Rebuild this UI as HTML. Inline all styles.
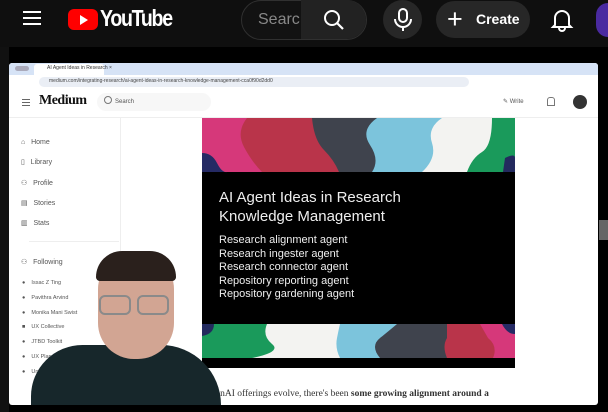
<!DOCTYPE html><html style="overflow:hidden;height:412px"><head><style>
body{margin:0;width:608px;height:412px;overflow:hidden;background:#000;font-family:"Liberation Sans",sans-serif;position:relative}
.a{position:absolute}
.t{color:#555;font-size:7px}
</style></head><body>
<div class="a" style="left:0;top:0;width:608px;height:47px;background:#0f0f0f"></div>
<div class="a" style="left:0;top:47px;width:608px;height:365px;background:#000"></div>
<div class="a" style="left:0;top:47px;width:9px;height:365px;background:#111"></div>
<div class="a" style="left:23px;top:11px;width:18px;height:2px;background:#fff;box-shadow:0 6px 0 #fff,0 12px 0 #fff"></div>
<div class="a" style="left:68px;top:9px;width:30px;height:21px;background:#f00;border-radius:6px"></div>
<div class="a" style="left:80px;top:15px;width:0;height:0;border-left:8px solid #fff;border-top:5px solid transparent;border-bottom:5px solid transparent"></div>
<div class="a" style="left:100px;top:5px;color:#fff;font-size:23px;font-weight:bold;letter-spacing:-1.5px;transform:scaleX(.85);transform-origin:left">YouTube</div>
<div class="a" style="left:241px;top:0;width:124px;height:38px;border:1px solid #303030;border-radius:20px;background:#121212"></div>
<div class="a" style="left:258px;top:1px;width:42px;height:38px;overflow:hidden;color:#888;font-size:16px;line-height:38px">Search</div>
<div class="a" style="left:301px;top:0;width:65px;height:39px;background:#222;border-radius:0 20px 20px 0"></div>
<svg class="a" style="left:322px;top:8px" width="24" height="24" viewBox="0 0 24 24"><circle cx="10" cy="10" r="7" stroke="#fff" stroke-width="2" fill="none"/><path d="M15 15l6 6" stroke="#fff" stroke-width="2.2"/></svg>
<div class="a" style="left:383px;top:0;width:39px;height:39px;border-radius:50%;background:#272727"></div>
<svg class="a" style="left:391px;top:7px" width="24" height="26" viewBox="0 0 24 26"><rect x="8" y="2" width="8" height="13" rx="4" stroke="#fff" stroke-width="2" fill="none"/><path d="M4 12a8 8 0 0016 0M12 20v4" stroke="#fff" stroke-width="2" fill="none"/></svg>
<div class="a" style="left:436px;top:1px;width:94px;height:37px;border-radius:20px;background:#272727"></div>
<div class="a" style="left:447px;top:2px;color:#fff;font-size:27px;line-height:34px">+</div>
<div class="a" style="left:476px;top:11px;color:#fff;font-size:14px;font-weight:bold">Create</div>
<svg class="a" style="left:550px;top:7px" width="24" height="26" viewBox="0 0 24 26"><path d="M5 18V11a7 7 0 0114 0v7l2 2H3z M9 21a3 3 0 006 0" stroke="#fff" stroke-width="2" fill="none"/></svg>
<div class="a" style="left:596px;top:3px;width:12px;height:34px;border-radius:17px 0 0 17px;background:#4a2aa0"></div>
<div class="a" style="left:9px;top:63px;width:589px;height:342px;background:#fff;border-radius:3px;overflow:hidden">
 <div class="a" style="left:0;top:0;width:589px;height:12px;background:#d6e3f6"></div>
 <div class="a" style="left:6px;top:3px;width:14px;height:5px;background:#aab;border-radius:3px"></div>
 <div class="a" style="left:25px;top:1px;width:70px;height:11px;background:#fff;border-radius:3px 3px 0 0"></div>
 <div class="a t" style="left:38px;top:2px;font-size:5px;color:#333">AI Agent Ideas in Research ×</div>
 <div class="a" style="left:0;top:12px;width:589px;height:14px;background:#fff"></div>
 <div class="a" style="left:30px;top:14px;width:430px;height:10px;background:#eaeef5;border-radius:5px"></div>
 <div class="a" style="left:40px;top:15px;font-size:5px;color:#444">medium.com/integrating-research/ai-agent-ideas-in-research-knowledge-management-cca0f90d2dd0</div>
 <div class="a" style="left:0;top:26px;width:589px;height:28px;background:#fff;border-bottom:1px solid #eee"></div>
 <div class="a" style="left:13px;top:36px;width:8px;height:1px;background:#666;box-shadow:0 3px 0 #666,0 6px 0 #666"></div>
 <div class="a" style="left:30px;top:30px;font-family:'Liberation Serif',serif;font-weight:bold;font-size:14px;color:#111;letter-spacing:-.5px">Medium</div>
 <div class="a" style="left:88px;top:30px;width:114px;height:18px;background:#f7f7f7;border-radius:10px"></div>
 <div class="a" style="left:95px;top:33px;width:6px;height:6px;border:1px solid #777;border-radius:50%"></div>
 <div class="a t" style="left:106px;top:36px;font-size:6px">Search</div>
 <div class="a t" style="left:494px;top:35px;font-size:6px">✎ Write</div>
 <div class="a" style="left:538px;top:34px;width:6px;height:7px;border:1px solid #777;border-radius:3px 3px 0 0"></div>
 <div class="a" style="left:564px;top:32px;width:14px;height:14px;border-radius:50%;background:#333"></div>
 <div class="a" style="left:111px;top:54px;width:1px;height:288px;background:#eee"></div>
 <div class="a" style="left:20px;top:178px;width:90px;height:1px;background:#eee"></div>
 <div class="a t" style="left:12px;top:70px;font-size:7px;line-height:20.3px;color:#555">
  ⌂&nbsp;&nbsp;&nbsp;Home<br>▯&nbsp;&nbsp;&nbsp;Library<br>⚇&nbsp;&nbsp;&nbsp;Profile<br>▤&nbsp;&nbsp;&nbsp;Stories<br>▥&nbsp;&nbsp;&nbsp;Stats</div>
 <div class="a t" style="left:12px;top:195px;font-size:7px">⚇&nbsp;&nbsp;&nbsp;Following</div>
 <div class="a t" style="left:13px;top:213px;font-size:5.5px;line-height:14.8px">
  ●&nbsp;&nbsp;&nbsp;&nbsp;Issac Z Ting<br>●&nbsp;&nbsp;&nbsp;&nbsp;Pavithra Arvind<br>●&nbsp;&nbsp;&nbsp;&nbsp;Monika Mani Swist<br>■&nbsp;&nbsp;&nbsp;&nbsp;UX Collective<br>●&nbsp;&nbsp;&nbsp;&nbsp;JTBD Toolkit<br>●&nbsp;&nbsp;&nbsp;&nbsp;UX Planet<br>●&nbsp;&nbsp;&nbsp;&nbsp;Unic</div>
 <div class="a" style="left:193px;top:55px;width:313px;height:250px;background:#000;overflow:hidden">
  <svg width="313" height="250" viewBox="0 0 313 250">
   <rect x="0" y="0" width="313" height="54" fill="#f3f3f1"/>
   <path d="M0 0h70v54H0z" fill="#d6387a"/>
   <path d="M0 35q10 0 15 10t10 9H0z" fill="#252a64"/>
   <path d="M45 0h100q-10 10 0 25t-5 29H60q-10-10-18-25t3-29z" fill="#b9344a"/>
   <path d="M110 0h82q-8 10 2 25t-2 29h-55q-5-12-15-22t-12-32z" fill="#3f434d"/>
   <path d="M175 0h65q-15 10-10 25t-10 29h-50q8-12-2-27t7-27z" fill="#7cc4dc"/>
   <path d="M290 0h23v54h-48q5-14 15-20t10-34z" fill="#1a9a5b"/>
   <path d="M303 40q10-5 10 0v14h-12z" fill="#232a5e"/>
   <rect x="0" y="206" width="313" height="34" fill="#f3f3f1"/>
   <path d="M0 206h65q-5 12 5 20t-20 14H0z" fill="#1a9a5b"/>
   <path d="M0 206h12q0 10-12 12z" fill="#232a5e"/>
   <path d="M138 206h60q-15 8-10 18t-5 16h-45q-5-10-3-20t3-14z" fill="#7cc4dc"/>
   <path d="M195 206h75v34h-92q-10-12 0-20t17-14z" fill="#3f434d"/>
   <path d="M245 206h68v34h-68q-5-12 0-20z" fill="#b9344a"/>
   <path d="M278 206h35v34h-22q5-12-5-20z" fill="#d6387a"/>
   <path d="M300 206h13v10q-8 0-13-10z" fill="#252a64"/>
   <rect x="0" y="240" width="313" height="10" fill="#000"/>
  </svg>
  <div class="a" style="left:17px;top:70px;color:#eee;font-size:15px;line-height:19px">AI Agent Ideas in Research<br>Knowledge Management</div>
  <div class="a" style="left:17px;top:116px;color:#eee;font-size:11px;line-height:13.5px">Research alignment agent<br>Research ingester agent<br>Research connector agent<br>Repository reporting agent<br>Repository gardening agent</div>
 </div>
 <div class="a" style="left:200px;top:326px;font-family:'Liberation Serif',serif;font-size:9.5px;color:#333;white-space:nowrap">GenAI offerings evolve, there's been <b>some growing alignment around a</b></div>
 <div class="a" style="left:22px;top:282px;width:190px;height:60px;background:#17272b;border-radius:60px 70px 0 0"></div>
 <div class="a" style="left:89px;top:192px;width:76px;height:104px;background:#d2a593;border-radius:34px 34px 36px 36px"></div>
 <div class="a" style="left:87px;top:188px;width:80px;height:30px;background:#2a201c;border-radius:40px 40px 6px 6px"></div>
 <div class="a" style="left:90px;top:232px;width:28px;height:16px;border:2px solid #8a8a8a;border-radius:6px"></div>
 <div class="a" style="left:128px;top:232px;width:28px;height:16px;border:2px solid #8a8a8a;border-radius:6px"></div>
</div>
<div class="a" style="left:599px;top:220px;width:9px;height:20px;background:#666"></div>
</body></html>
